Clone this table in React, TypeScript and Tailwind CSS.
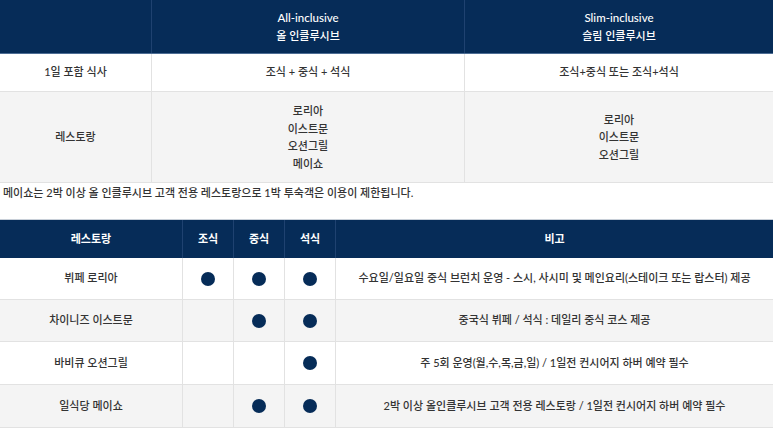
import React from "react";

const NAVY = "bg-[#062c58]";

function Dot() {
  return <span className="block w-[14px] h-[14px] rounded-full bg-[#062c58]" />;
}

const rows = [
  { name: "뷔페 로리아", b: true, l: true, d: true, note: "수요일/일요일 중식 브런치 운영 - 스시, 사시미 및 메인요리(스테이크 또는 랍스터) 제공", bg: "bg-white", h: "h-[42px]" },
  { name: "차이니즈 이스트문", b: false, l: true, d: true, note: "중국식 뷔페 / 석식 : 데일리 중식 코스 제공", bg: "bg-[#f4f4f4]", h: "h-[42px]" },
  { name: "바비큐 오션그릴", b: false, l: false, d: true, note: "주 5회 운영(월,수,목,금,일) / 1일전 컨시어지 하버 예약 필수", bg: "bg-white", h: "h-[43px]" },
  { name: "일식당 메이쇼", b: false, l: true, d: true, note: "2박 이상 올인클루시브 고객 전용 레스토랑 / 1일전 컨시어지 하버 예약 필수", bg: "bg-[#f4f4f4]", h: "h-[43px]" },
];

export default function App() {
  return (
    <div className="w-[773px] h-[428px] overflow-hidden bg-white text-[11px] font-medium text-[#333] font-['Lato','Noto_Sans_CJK_KR',sans-serif]">
      {/* Table 1 */}
      <div className={`grid grid-cols-[151px_313px_1fr] h-[54px] ${NAVY} text-white border-b border-[#4d6d94]`}>
        <div />
        <div className="flex flex-col items-center justify-center border-l border-[#1f4270] leading-[17.5px]">
          <span className="text-[11.5px]">All-inclusive</span>
          <span>올 인클루시브</span>
        </div>
        <div className="flex flex-col items-center justify-center border-l border-[#1f4270] leading-[17.5px]">
          <span className="text-[11.5px]">Slim-inclusive</span>
          <span>슬림 인클루시브</span>
        </div>
      </div>
      <div className="grid grid-cols-[151px_313px_1fr] h-[38px] bg-white border-b border-[#e2e2e2]">
        <div className="flex items-center justify-center">1일 포함 식사</div>
        <div className="flex items-center justify-center border-l border-[#e2e2e2]">조식 + 중식 + 석식</div>
        <div className="flex items-center justify-center border-l border-[#e2e2e2]">조식+중식 또는 조식+석식</div>
      </div>
      <div className="grid grid-cols-[151px_313px_1fr] h-[91px] bg-[#f4f4f4] border-b border-[#e2e2e2]">
        <div className="flex items-center justify-center">레스토랑</div>
        <div className="flex flex-col items-center justify-center border-l border-[#e2e2e2] leading-[17.5px]">
          <span>로리아</span>
          <span>이스트문</span>
          <span>오션그릴</span>
          <span>메이쇼</span>
        </div>
        <div className="flex flex-col items-center justify-center border-l border-[#e2e2e2] leading-[17.5px]">
          <span>로리아</span>
          <span>이스트문</span>
          <span>오션그릴</span>
        </div>
      </div>

      {/* Note */}
      <div className="h-[36px] pl-[3px] pt-px leading-[18px] text-[#333]">
        메이쇼는 2박 이상 올 인클루시브 고객 전용 레스토랑으로 1박 투숙객은 이용이 제한됩니다.
      </div>

      {/* Table 2 */}
      <div className={`grid grid-cols-[182px_51px_51px_51px_1fr] h-[39px] ${NAVY} text-white font-bold border-t border-[#c8cfd8]`}>
        <div className="flex items-center justify-center">레스토랑</div>
        <div className="flex items-center justify-center border-l border-[#1f4270]">조식</div>
        <div className="flex items-center justify-center border-l border-[#1f4270]">중식</div>
        <div className="flex items-center justify-center border-l border-[#1f4270]">석식</div>
        <div className="flex items-center justify-center border-l border-[#1f4270]">비고</div>
      </div>
      {rows.map((r) => (
        <div key={r.name} className={`grid grid-cols-[182px_51px_51px_51px_1fr] ${r.h} ${r.bg} border-b border-[#e2e2e2]`}>
          <div className="flex items-center justify-center">{r.name}</div>
          <div className="flex items-center justify-center border-l border-[#e2e2e2]">{r.b && <Dot />}</div>
          <div className="flex items-center justify-center border-l border-[#e2e2e2]">{r.l && <Dot />}</div>
          <div className="flex items-center justify-center border-l border-[#e2e2e2]">{r.d && <Dot />}</div>
          <div className="flex items-center justify-center border-l border-[#e2e2e2]">{r.note}</div>
        </div>
      ))}
    </div>
  );
}
